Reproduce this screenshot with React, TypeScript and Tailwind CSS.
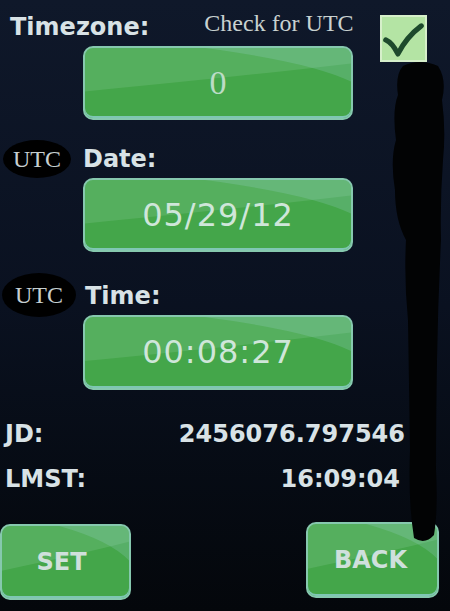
import React from "react";

const sans = { fontFamily: '"DejaVu Sans", Verdana, sans-serif' };
const serif = { fontFamily: '"Liberation Serif", "Times New Roman", serif' };

function Gloss() {
  return (
    <svg
      className="pointer-events-none absolute inset-0 h-full w-full"
      viewBox="0 0 100 100"
      preserveAspectRatio="none"
    >
      <path d="M0 0 H100 V22 Q60 40 0 62 Z" fill="#b9e3d0" opacity="0.15" />
      <path d="M45 0 H100 V48 Q85 20 45 0 Z" fill="#a6d8e0" opacity="0.2" />
    </svg>
  );
}

function GreenButton({
  children,
  className,
}: {
  children: React.ReactNode;
  className: string;
}) {
  return (
    <div
      className={`relative flex items-center justify-center overflow-hidden rounded-[10px] border-2 border-[#86c8ae] bg-[#44a64a] shadow-[inset_0_-2px_0_#7fc7b4] ${className}`}
    >
      <Gloss />
      <div className="relative">{children}</div>
    </div>
  );
}

function Label({ children }: { children: React.ReactNode }) {
  return (
    <span className="text-[24px] font-bold leading-[28px] text-[#d8e2e6]" style={sans}>
      {children}
    </span>
  );
}

function Value({ children }: { children: React.ReactNode }) {
  return (
    <span
      className="text-[32px] font-normal leading-none tracking-[1px] text-[#cfe6da]"
      style={sans}
    >
      {children}
    </span>
  );
}

function Utc({ className }: { className: string }) {
  return (
    <span
      className={`flex items-center justify-center rounded-[50%] bg-black text-[24px] leading-[28px] text-[#c6cfd0] ${className}`}
      style={serif}
    >
      UTC
    </span>
  );
}

export default function App() {
  return (
    <div className="relative h-[611px] w-[450px] overflow-hidden bg-gradient-to-b from-[#0f182a] via-[#0a1120] to-[#04070b]">
      <div className="flex">
        <div className="w-[380px]">
          {/* timezone header */}
          <div className="flex h-[46px] items-start">
            <div className="ml-[10px] mt-[13px]">
              <Label>Timezone:</Label>
            </div>
            <span
              className="ml-[55px] mt-[9px] text-[24px] leading-[28px] text-[#c8d1d0]"
              style={serif}
            >
              Check for UTC
            </span>
          </div>
          <GreenButton className="ml-[83px] h-[74px] w-[270px]">
            <span className="text-[34px] leading-none text-[#bcdcc6]" style={serif}>
              0
            </span>
          </GreenButton>

          {/* date */}
          <div className="mt-[22px] flex h-[33px] items-center">
            <Utc className="ml-[3px] h-[38px] w-[68px]" />
            <div className="ml-[12px]">
              <Label>Date:</Label>
            </div>
          </div>
          <GreenButton className="ml-[83px] mt-[3px] h-[74px] w-[270px]">
            <Value>05/29/12</Value>
          </GreenButton>

          {/* time */}
          <div className="mt-[22px] flex h-[42px] items-center">
            <Utc className="ml-[2px] h-[44px] w-[74px]" />
            <div className="ml-[9px] mt-[2px]">
              <Label>Time:</Label>
            </div>
          </div>
          <GreenButton className="ml-[83px] mt-[-1px] h-[75px] w-[270px]">
            <Value>00:08:27</Value>
          </GreenButton>
        </div>

        <div className="pt-[15px]">
          <div className="flex h-[47px] w-[47px] items-center justify-center border-2 border-[#d6efca] bg-[#b4e4a4]">
            <svg viewBox="0 0 46 46" className="h-[44px] w-[44px]">
              <path
                d="M4 24 Q11 27 17 39 Q26 21 42 9"
                fill="none"
                stroke="#1d4a2c"
                strokeWidth="5.5"
                strokeLinecap="round"
                strokeLinejoin="round"
              />
            </svg>
          </div>
        </div>
      </div>

      {/* readouts */}
      <div className="mt-[30px] w-[405px] pl-[5px]">
        <div className="flex justify-between">
          <Label>JD:</Label>
          <Label>2456076.797546</Label>
        </div>
        <div className="mt-[17px] flex justify-between pr-[5px]">
          <Label>LMST:</Label>
          <Label>16:09:04</Label>
        </div>
      </div>

      {/* bottom buttons */}
      <div className="mt-[29px] flex items-start justify-between pr-[11px]">
        <GreenButton className="mt-[2px] h-[76px] w-[131px]">
          <span className="mr-[8px] text-[24px] font-bold text-[#cfe0dc]" style={sans}>
            SET
          </span>
        </GreenButton>
        <GreenButton className="h-[76px] w-[133px]">
          <span className="mr-[4px] text-[24px] font-bold text-[#cfe0dc]" style={sans}>
            BACK
          </span>
        </GreenButton>
      </div>

      {/* redaction scribble on the right */}
      <svg
        className="pointer-events-none absolute inset-0 h-[611px] w-[450px]"
        viewBox="0 0 450 611"
      >
        <path
          d="M403 66 Q420 58 438 66 Q447 80 442 100 Q446 130 443 160 Q440 200 441 240 Q438 300 437 360 Q436 420 436 470 Q438 510 434 535 Q425 545 414 538 Q408 500 410 450 Q409 380 408 320 Q404 280 406 240 Q395 220 395 190 Q390 160 396 140 Q392 110 398 95 Q395 75 403 66 Z"
          fill="#020304"
        />
      </svg>
    </div>
  );
}
